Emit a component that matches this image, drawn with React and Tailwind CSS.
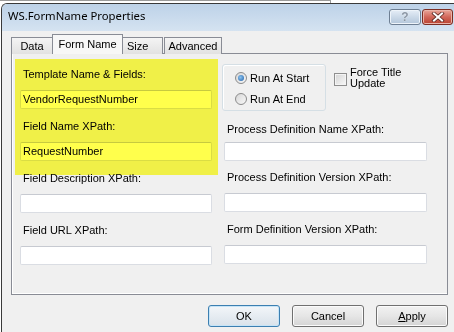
export default function App() {
  return (
    <div className="relative w-[454px] h-[332px] overflow-hidden bg-white font-['Liberation_Sans',Arial,sans-serif] text-[11px] text-black">
      {/* window behind */}
      <div className="flex h-[3px]">
        <div className="w-[331px] border-t border-r border-[#9a9a9a]" />
      </div>

      <div className="ml-[1px] h-[329px] flex flex-col border-l border-t border-[#3a3a3a] rounded-tl-[6px] overflow-hidden bg-[#f0f0f0]">
        <TitleBar />

        <div className="flex-1 pl-[9px] pt-[3px]">
          <Tabs />
          <div className="-mt-px w-[437px] h-[242px] border border-[#898c95] shadow-[inset_1px_-1px_0_#ffffff] pl-[8px] pt-[10px]">
            <div className="grid grid-cols-[192px_203px] gap-x-[12px]">
              <LeftColumn />
              <RightColumn />
            </div>
          </div>

          <div className="w-[437px] mt-[10px] flex justify-end gap-[12px]">
            <Button primary>OK</Button>
            <Button>Cancel</Button>
            <Button>
              <span className="underline">A</span>pply
            </Button>
          </div>
        </div>
      </div>

      {/* highlighter overlay */}
      <div className="absolute left-[15px] top-[59px] w-[203px] h-[116px] bg-[#ffff4c] mix-blend-multiply pointer-events-none" />
    </div>
  );
}

function TitleBar() {
  return (
    <div className="h-[27px] flex justify-between bg-gradient-to-b from-[#bdd2e8] to-[#d5e3f1]">
      <div className="pl-[6px] pt-[4px] font-['Noto_Sans',sans-serif] text-[11.3px] leading-[16px] text-black">
        WS.FormName Properties
      </div>
      <div className="flex gap-[1px] pt-[5px] pr-[1px]">
        <div className="w-[32px] h-[16px] rounded-[3px] border border-[#6e7f93] bg-gradient-to-b from-[#e6eef7] via-[#cbd9e8] to-[#b3c6da] shadow-[inset_0_0_0_1px_#eef4fa] flex items-center justify-center">
          <span className="font-['Liberation_Sans',sans-serif] font-bold text-[12px] leading-[12px] text-[#8a96a4] [text-shadow:0_0_1px_#ffffff]">?</span>
        </div>
        <div className="w-[31px] h-[16px] rounded-[3px] border border-[#7c2d22] bg-gradient-to-b from-[#e8a69a] via-[#d2675a] to-[#b9412f] shadow-[inset_0_0_0_1px_#eab3a8] flex items-center justify-center">
          <svg width="14" height="10" viewBox="0 0 14 10">
            <path d="M3 1.5 L11 8.5 M11 1.5 L3 8.5" stroke="#5a2a24" strokeWidth="3.6" strokeLinecap="square" />
            <path d="M3 1.5 L11 8.5 M11 1.5 L3 8.5" stroke="#ffffff" strokeWidth="2" strokeLinecap="square" />
          </svg>
        </div>
      </div>
    </div>
  );
}

function Tabs() {
  const tab =
    "h-[17px] border border-b-0 border-[#898c95] bg-gradient-to-b from-[#f4f4f4] to-[#e2e2e2] flex items-center justify-center leading-[14px]";
  return (
    <div className="relative z-10 h-[20px] flex items-end">
      <div className={tab + " w-[42px]"}>Data</div>
      <div className="-ml-px h-[20px] w-[71px] border border-b-0 border-[#898c95] bg-[#f7f7f7] flex items-center justify-center pb-[2px] leading-[14px]">
        Form Name
      </div>
      <div className={tab + " -ml-px w-[41px] justify-start pl-[4px]"}>Size</div>
      <div className={tab + " ml-[1px] w-[58px]"}>Advanced</div>
    </div>
  );
}

function Label({ children, className = "" }) {
  return <div className={"h-[14px] leading-[14px] pl-[3px] whitespace-nowrap " + className}>{children}</div>;
}

function Input({ value = "", className = "" }) {
  return (
    <div className={"h-[19px] border border-[#dadde3] border-t-[#c7cad1] rounded-[2px] bg-white pl-[2px] leading-[17px] " + className}>
      {value}
    </div>
  );
}

function LeftColumn() {
  return (
    <div className="flex flex-col pt-[3px]">
      <Label>Template Name &amp; Fields:</Label>
      <Input className="mt-[9px]" value="VendorRequestNumber" />
      <Label className="mt-[10px]">Field Name XPath:</Label>
      <Input className="mt-[9px]" value="RequestNumber" />
      <Label className="mt-[10px]">Field Description XPath:</Label>
      <Input className="mt-[9px]" />
      <Label className="mt-[10px]">Field URL XPath:</Label>
      <Input className="mt-[9px]" />
    </div>
  );
}

function Radio({ checked, label }) {
  return (
    <div className="flex items-center h-[14px]">
      <div className="w-[12px] h-[12px] rounded-full border border-[#8b8b8b] bg-gradient-to-br from-[#d8d8d8] to-[#f7f7f7] flex items-center justify-center">
        {checked && (
          <div className="w-[6px] h-[6px] rounded-full bg-[radial-gradient(circle_at_40%_40%,#8cc4f0,#1f5fa8)]" />
        )}
      </div>
      <span className="ml-[3px]">{label}</span>
    </div>
  );
}

function RightColumn() {
  return (
    <div className="flex flex-col">
      <div className="flex items-start">
        <div className="-ml-[2px] w-[104px] h-[47px] rounded-[3px] border border-[#d5dfe5] shadow-[inset_1px_1px_0_#ffffff] pl-[12px] pt-[6px] flex flex-col gap-[7px]">
          <Radio checked label="Run At Start" />
          <Radio label="Run At End" />
        </div>
        <div className="ml-[8px] mt-[3px] flex items-start">
          <div className="mt-[6px] w-[13px] h-[13px] border border-[#8f8f8f] bg-gradient-to-br from-[#d4d4d4] to-[#f9f9f9] shadow-[inset_0_0_0_1px_#f4f4f4]" />
          <div className="ml-[3px] leading-[11px]">
            Force Title
            <br />
            Update
          </div>
        </div>
      </div>
      <Label className="mt-[11px] pl-[2px]">Process Definition Name XPath:</Label>
      <Input className="mt-[6px]" />
      <Label className="mt-[9px] pl-[2px]">Process Definition Version XPath:</Label>
      <Input className="mt-[9px]" />
      <Label className="mt-[10px] pl-[2px]">Form Definition Version XPath:</Label>
      <Input className="mt-[9px]" />
    </div>
  );
}

function Button({ children, primary }) {
  return (
    <div
      className={
        "w-[72px] h-[22px] rounded-[3px] border flex items-center justify-center leading-[14px] " +
        (primary
          ? "border-[#3c7fb1] bg-gradient-to-b from-[#f3f6f9] to-[#d9e2ea] shadow-[inset_0_0_0_1px_#c6e4f7]"
          : "border-[#707070] bg-gradient-to-b from-[#f2f2f2] via-[#e6e6e6] to-[#d4d4d4] shadow-[inset_0_0_0_1px_#fbfbfb]")
      }
    >
      {children}
    </div>
  );
}
